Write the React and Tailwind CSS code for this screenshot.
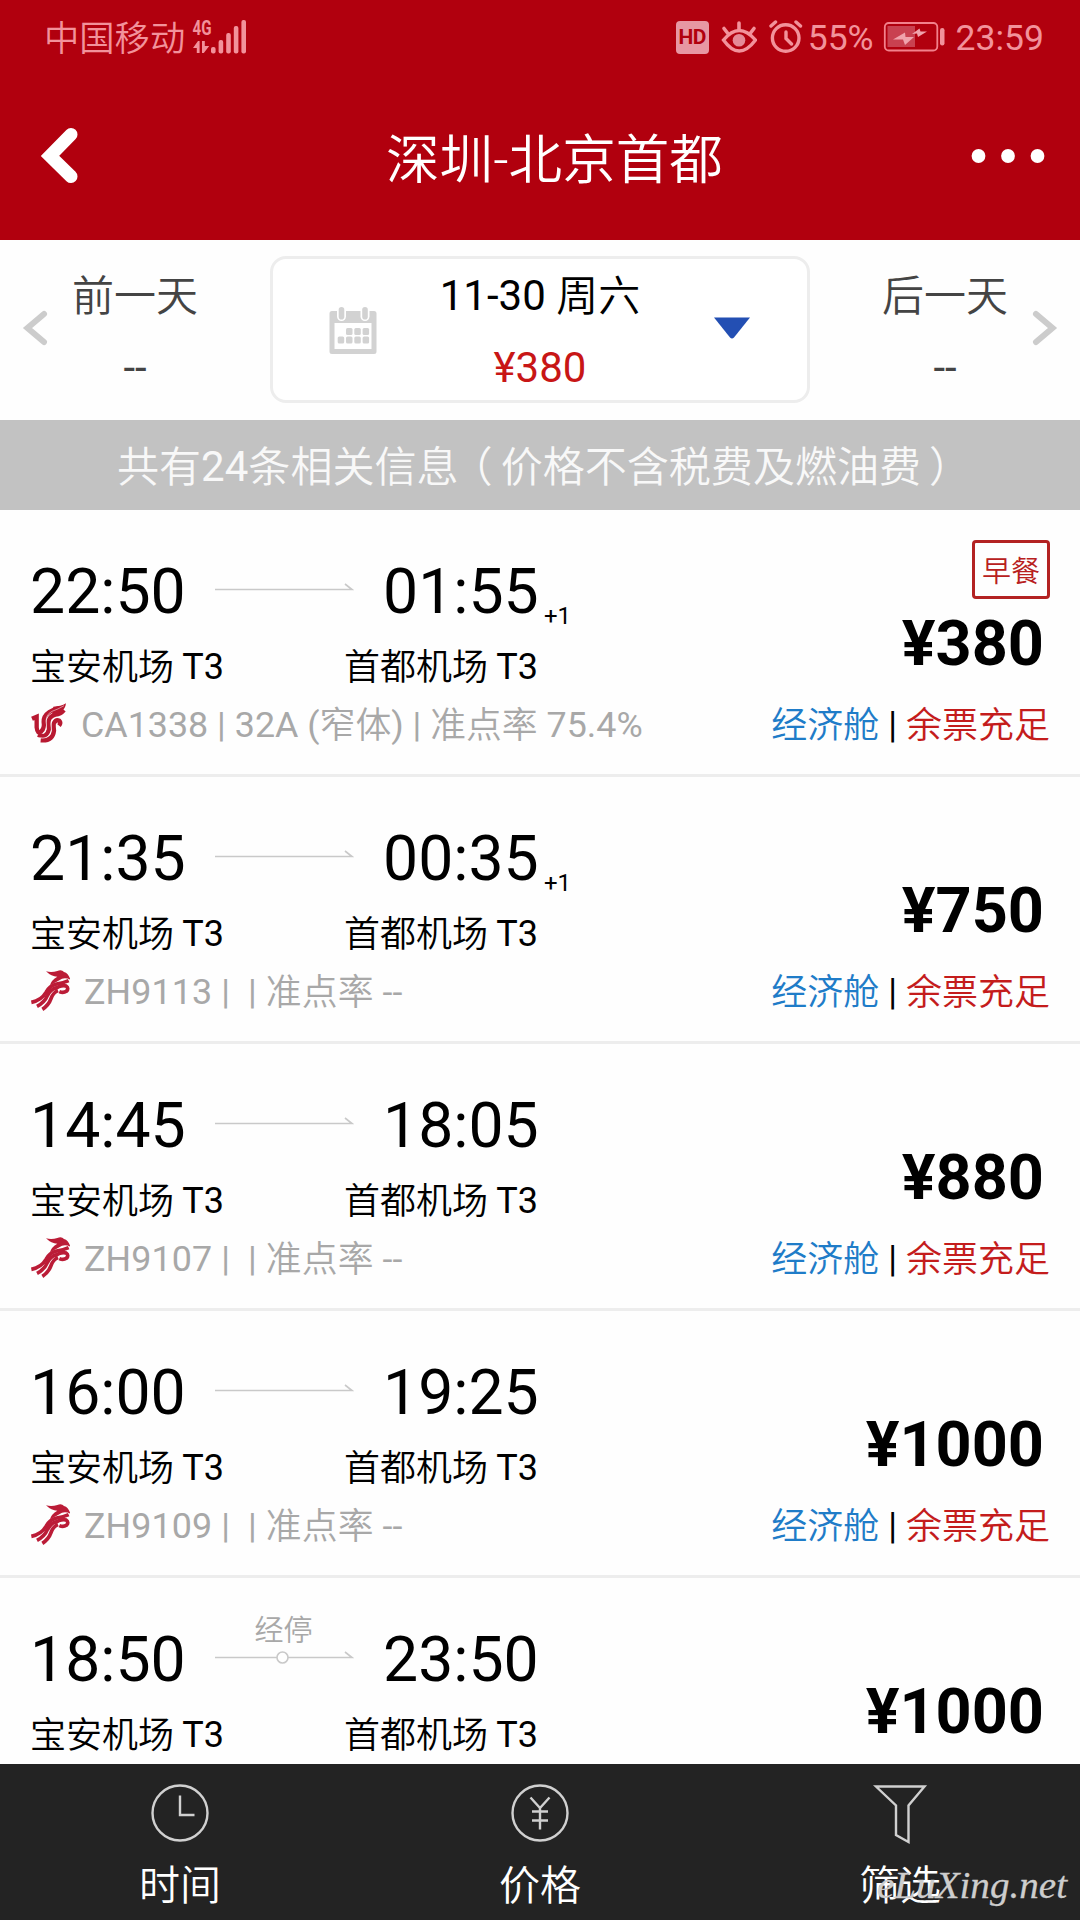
const FLIGHTS = [
  { dep: '22:50', arr: '01:55', next: true, logo: 'ca', info: ['CA1338 | 32A (', '窄体', ') | ', '准点率', ' 75.4%'], price: '¥380', badge: '早餐' },
  { dep: '21:35', arr: '00:35', next: true, logo: 'zh', info: ['ZH9113 |  | ', '准点率', ' --'], price: '¥750' },
  { dep: '14:45', arr: '18:05', logo: 'zh', info: ['ZH9107 |  | ', '准点率', ' --'], price: '¥880' },
  { dep: '16:00', arr: '19:25', logo: 'zh', info: ['ZH9109 |  | ', '准点率', ' --'], price: '¥1000' },
  { dep: '18:50', arr: '23:50', stop: '经停', price: '¥1000' },
];

/* Chinese run: lighter weight, set slightly below the Latin baseline. */
function Zh({ children }) {
  return <span className="inline-block translate-y-[1px] font-[350]">{children}</span>;
}

function SignalIcon() {
  return (
    <svg className="ml-[6px] h-[36px] w-[56px]" viewBox="190 18 56 36" fill="#f2929b">
      <text x="191.5" y="34" fontSize="20" fontWeight="700" textLength="19" lengthAdjust="spacingAndGlyphs">4G</text>
      <path d="M192 47l5-7h1.600v12h-2.800v-5zM201 40h2.800v5h4.400l-5.400 7H201z" />
      <rect x="210" y="46" width="4.600" height="6.500" rx="2" />
      <rect x="217.600" y="39" width="4.600" height="13.500" rx="2" />
      <rect x="225.200" y="32" width="4.600" height="20.500" rx="2" />
      <rect x="232.800" y="25" width="4.600" height="27.500" rx="2" />
      <rect x="240.400" y="19" width="4.600" height="33.500" rx="2" />
    </svg>
  );
}

function EyeIcon() {
  return (
    <svg className="ml-[12px] h-[34px] w-[36px]" viewBox="721 20 36 34" fill="none" stroke="#f2929b" strokeWidth="3.600" strokeLinecap="round">
      <path d="M723.500 40Q739 21 755.500 40Q739 62 723.500 40z" strokeWidth="3.400" />
      <circle cx="739" cy="40.200" r="6.300" fill="#e58a97" stroke="none" />
      <path d="M739 23v6M724 28.500l3.500 4.500M754 28.500l-3.500 4.500" />
    </svg>
  );
}

function AlarmIcon() {
  return (
    <svg className="ml-[12px] h-[34px] w-[34px]" viewBox="769 20 34 34" fill="none" stroke="#f2929b" strokeWidth="3.400" strokeLinecap="round">
      <circle cx="785.700" cy="38" r="13.300" />
      <path d="M771 26l4.500-4M800.500 26l-4.500-4M786 32v6.500l5.500 5.500" />
    </svg>
  );
}

function BatteryIcon() {
  return (
    <svg className="ml-[9px] mr-[1px] h-[32px] w-[62px]" viewBox="883 21 62 32">
      <rect x="884.800" y="23" width="52.500" height="27.500" rx="4" fill="none" stroke="#f2818c" strokeWidth="1.800" />
      <rect x="887.500" y="26" width="27.500" height="21" fill="#c94150" />
      <rect x="940" y="28" width="4.500" height="17.500" rx="2.200" fill="#f2929b" />
      <path d="M893 39.500l12-7 .5 4.500h8.500l-9 8-2-5.500z M912 34l7.500-5.500 1 3h6.500l-9 5.500-1-3.500z" fill="#f0a3ac" />
    </svg>
  );
}

function StatusBar() {
  return (
    <div className="flex h-[74px] items-center pl-[44px] pr-[36px] text-[36px] leading-[40px] text-[#f2929b]">
      <span className="pt-[3px] text-[35.300px] font-[350]">中国移动</span>
      <SignalIcon />
      <div className="ml-auto flex h-[33px] w-[33px] items-center justify-center rounded-[4px] bg-[#e797a3] text-[21px] font-bold leading-none tracking-[-0.5px] text-[#b1000e]">
        HD
      </div>
      <EyeIcon />
      <AlarmIcon />
      <span className="ml-[5px] pt-[1px] text-[35.500px]">55%</span>
      <BatteryIcon />
      <span className="ml-[10px] pt-[1px] text-[35.500px]">23:59</span>
    </div>
  );
}

function Header() {
  return (
    <header className="h-[240px] bg-[#b1000e]">
      <StatusBar />
      <div className="flex h-[166px] items-center justify-between pl-[39px] pr-[34px]">
        <svg className="mb-[4px] h-[60px] w-[66px]" viewBox="0 0 66 60" fill="none">
          <path d="M32 9.500L11 31L32 51.500" stroke="#fff" strokeWidth="13" strokeLinecap="round" />
        </svg>
        <h1 className="ml-[34px] pt-[8px] text-[53.600px] font-[350] leading-[64px] text-white">深圳-北京首都</h1>
        <svg className="mb-[2px] h-[20px] w-[76px]" viewBox="0 0 76 20" fill="#fff">
          <circle cx="8.500" cy="10" r="6.900" />
          <circle cx="38" cy="10" r="6.900" />
          <circle cx="67.500" cy="10" r="6.900" />
        </svg>
      </div>
    </header>
  );
}

function Chevron({ flip }) {
  return (
    <svg className={flip ? 'h-[40px] w-[28px] rotate-180' : 'h-[40px] w-[28px]'} viewBox="0 0 28 40" fill="none">
      <path d="M22 6L5.500 20L22 34" stroke="#ccc" strokeWidth="6" strokeLinecap="round" />
    </svg>
  );
}

function CalendarIcon() {
  return (
    <svg className="h-[48px] w-[48px]" viewBox="0 0 48 48" fill="#d2d2d2">
      <path fillRule="evenodd" d="M3 4h42q2.500 0 2.500 2.500v38q0 2.500-2.500 2.500H3q-2.500 0-2.500-2.500v-38Q.5 4 3 4zM5.500 16v26h37V16z" />
      <rect x="8" y="-1" width="9" height="15" rx="4.500" fill="#fff" />
      <rect x="31.500" y="-1" width="9" height="15" rx="4.500" fill="#fff" />
      <rect x="9.700" y="0" width="5.600" height="12.500" rx="2.800" />
      <rect x="33.200" y="0" width="5.600" height="12.500" rx="2.800" />
      {[17, 25.3, 33.6].map((x) => (
        <rect key={x} x={x} y="21" width="6.500" height="7" rx="1.500" />
      ))}
      {[8.7, 17, 25.3, 33.6].map((x) => (
        <rect key={x} x={x} y="29.500" width="6.500" height="7" rx="1.500" />
      ))}
    </svg>
  );
}

function DateBar() {
  return (
    <section className="flex h-[180px] items-start justify-between bg-[#fefefe] px-[22px] pt-[16px] text-[42px] leading-[48px]">
      <div className="flex">
        <div className="pt-[52px]"><Chevron /></div>
        <div className="ml-[20px] flex w-[130px] flex-col items-center gap-[24px] pt-[16px] text-[#444]">
          <Zh>前一天</Zh>
          <span>--</span>
        </div>
      </div>
      <div className="flex h-[147px] w-[540px] items-start justify-between rounded-[16px] border-[3px] border-[#ededed] bg-white pl-[56px] pr-[56px]">
        <div className="pt-[48px]"><CalendarIcon /></div>
        <div className="mr-[10px] flex flex-col items-center gap-[24px] pt-[13px] text-black">
          <span>11-30 <Zh>周六</Zh></span>
          <span className="text-[#c81616]">¥380</span>
        </div>
        <svg className="mt-[57px] h-[24px] w-[38px]" viewBox="0 0 38 24" fill="#234fb3">
          <path d="M1 1.500h36L21 21.500q-2 2-4 0z" />
        </svg>
      </div>
      <div className="flex">
        <div className="mr-[20px] flex w-[130px] flex-col items-center gap-[24px] pt-[16px] text-[#444]">
          <Zh>后一天</Zh>
          <span>--</span>
        </div>
        <div className="pt-[52px]"><Chevron flip /></div>
      </div>
    </section>
  );
}

function AirChinaLogo() {
  return (
    <svg className="h-[42px] w-[40px]" viewBox="30 36 120 126" fill="none" stroke="#b81931" strokeWidth="13">
      <path d="M36 86L50 80V112Q52 134 64 124Q74 114 71 96Q70 78 88 66Q100 58 118 54" />
      <path d="M100 50Q122 50 138 40Q136 58 122 66Q106 70 96 76z" fill="#b81931" stroke="none" />
      <path d="M54 134Q80 146 87 118Q85 100 86 92Q90 78 106 74Q122 72 132 60" />
      <path d="M62 151Q98 154 102 122Q100 104 102 99Q108 87 118 92Q124 98 117 107" />
      <path d="M132 47Q114 58 96 64Q76 74 79 98Q82 120 70 131M58 143Q90 150 94 120Q90 98 96 88" stroke="#fff" strokeWidth="1.500" />
    </svg>
  );
}

function ShenzhenLogo() {
  return (
    <svg className="h-[42px] w-[40px]" viewBox="30 27 120 126" fill="none" stroke="#bb1c37" strokeWidth="11">
      <path d="M78 34Q95 38 112 33Q125 28 132 36Q146 40 151 59Q140 53 126 56Q112 64 90 76Q94 60 112 50Q94 50 78 34z" fill="#bb1c37" stroke="none" />
      <path d="M146 62Q130 69 110 72Q88 77 78 97Q64 121 34 127" />
      <path d="M108 83Q91 88 82 107Q74 127 51 139" />
      <path d="M114 92Q99 98 93 116Q86 136 67 148" />
      <path d="M102 88Q124 73 138 78Q148 85 139 94Q130 100 118 95" />
    </svg>
  );
}

function RouteArrow({ stop }) {
  return (
    <div className="flex h-[64px] w-[140px] flex-col items-center">
      <span className="-mt-[17px] h-[33px] text-[29px] font-[350] leading-[40px] text-[#a8a8a8]">
        {stop ? <span className="mr-[3px]">{stop}</span> : null}
      </span>
      <svg className="mt-[4px] h-[18px] w-[140px]" viewBox="0 0 140 18" fill="none" stroke="#c9c9c9" strokeWidth="1.600">
        <path d="M0 9.500H137L130 4" />
        {stop ? <circle cx="67.500" cy="9.500" r="5.500" fill="#fff" /> : null}
      </svg>
    </div>
  );
}

function FlightRow({ flight }) {
  return (
    <li className="flex h-[267px] shrink-0 justify-between border-b-[3px] border-[#ededed] bg-[#fefefe] pl-[30px] pr-[30px]">
      <div className="pt-[50px]">
        <div className="flex h-[64px] text-[62.500px] leading-[64px] text-black">
          <span className="w-[185px]">{flight.dep}</span>
          <RouteArrow stop={flight.stop} />
          <span className="ml-[28px] w-[154px]">{flight.arr}</span>
          {flight.next ? <span className="ml-[7px] mt-[24px] text-[24px]">+1</span> : null}
        </div>
        <div className="mt-[23px] flex text-[36px] leading-[40px] text-black">
          <span className="w-[314px]"><Zh>宝安机场</Zh> T3</span>
          <span><Zh>首都机场</Zh> T3</span>
        </div>
        {flight.logo ? (
          <div className="mt-[18px] flex h-[40px] text-[35.850px] leading-[40px] text-[#a8a8a8]">
            <span className="-mt-[3px] w-[51px]">{flight.logo === 'ca' ? <AirChinaLogo /> : <ShenzhenLogo />}</span>
            <span className={flight.logo === 'ca' ? 'whitespace-pre' : 'ml-[3px] whitespace-pre tracking-[0.1px]'}>
              {flight.info.map((part, i) => (i % 2 ? <Zh key={i}>{part}</Zh> : part))}
            </span>
          </div>
        ) : null}
      </div>
      <div className="flex flex-col items-end pt-[30px]">
        <div className="h-[59px]">
          {flight.badge ? (
            <span className="flex h-[59px] w-[78px] items-center justify-center rounded-[4px] border-[3px] border-[#b32222] pt-[6px] text-[29px] font-[350] text-[#b82020]">
              {flight.badge}
            </span>
          ) : null}
        </div>
        <span className="mr-[6px] mt-[13px] text-[63px] font-bold leading-[64px] text-black">{flight.price}</span>
        {flight.logo ? (
          <div className="mt-[29px] text-[36px] leading-[40px] text-black">
            <span className="text-[#1f7cc8]"><Zh>经济舱</Zh></span> | <span className="text-[#c41c1c]"><Zh>余票充足</Zh></span>
          </div>
        ) : null}
      </div>
    </li>
  );
}

function TabBar() {
  return (
    <nav className="relative grid h-[156px] shrink-0 grid-cols-[360px_360px_360px] bg-[#232323] text-[41px] leading-[48px] text-white">
      <div className="flex flex-col items-center pt-[19px]">
        <svg className="h-[60px] w-[60px]" viewBox="0 0 60 60" fill="none" stroke="#d0d0d0" strokeWidth="2.400">
          <circle cx="30" cy="30" r="27.500" />
          <path d="M30 12.500V32H44.500" />
        </svg>
        <span className="mt-[19px] font-[350]">时间</span>
      </div>
      <div className="flex flex-col items-center pt-[19px]">
        <svg className="h-[60px] w-[60px]" viewBox="0 0 60 60" fill="none" stroke="#d0d0d0" strokeWidth="2.400">
          <circle cx="30" cy="30" r="27.500" />
          <path d="M20.500 14.500L30 25L39.500 14.500M30 25V46.500M22 28.500H38M22 37.500H38" />
        </svg>
        <span className="mt-[19px] font-[350]">价格</span>
      </div>
      <div className="flex flex-col items-center pt-[19px]">
        <svg className="h-[62px] w-[60px]" viewBox="0 0 60 62" fill="none" stroke="#d0d0d0" strokeWidth="2.400">
          <path d="M6 3.500H54.500L38.500 22.500V59L26 52V22.500z" />
        </svg>
        <span className="mt-[17px] font-[350]">筛选</span>
      </div>
      <svg className="absolute bottom-0 right-0 h-[64px] w-[210px]" viewBox="0 0 210 64">
        <text x="7" y="42" fontSize="38" fontStyle="italic" textLength="190" lengthAdjust="spacingAndGlyphs" fill="#cdcdcd" stroke="#cdcdcd" strokeWidth=".3" style={{ fontFamily: '"Liberation Serif", serif' }}>eLuXing.net</text>
      </svg>
    </nav>
  );
}

export default function App() {
  return (
    <div className="flex h-[1920px] w-[1080px] flex-col overflow-hidden bg-[#fefefe] font-[Roboto,'Noto_Sans_CJK_SC',sans-serif]">
      <Header />
      <DateBar />
      <div className="h-[90px] shrink-0 whitespace-nowrap bg-[#c2c2c2] pl-[117px] pt-[23px] text-[42.050px] leading-[48px] text-[#f8f8f8]">
        <Zh>共有</Zh>24<Zh>条相关信息<span className="inline-block -translate-x-[8px]">（</span>价格不含税费及燃油费<span className="inline-block translate-x-[8px]">）</span></Zh>
      </div>
      <ul className="flex min-h-0 flex-1 flex-col overflow-hidden">
        {FLIGHTS.map((f) => (
          <FlightRow key={f.dep} flight={f} />
        ))}
      </ul>
      <TabBar />
    </div>
  );
}
